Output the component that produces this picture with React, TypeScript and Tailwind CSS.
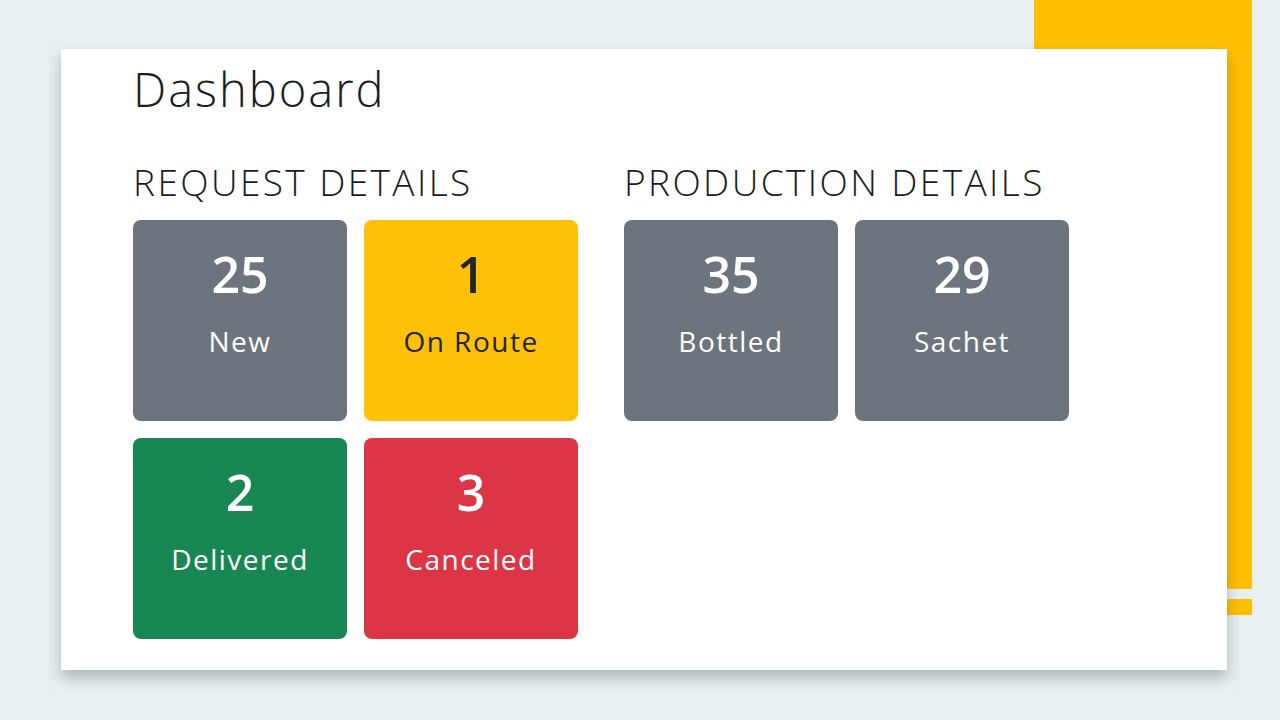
import React from 'react';

type Tile = { value: number; label: string; bg: string; text: string };

const requestTiles: Tile[] = [
  { value: 25, label: 'New', bg: 'bg-[#6c757d]', text: 'text-white' },
  { value: 1, label: 'On Route', bg: 'bg-[#ffc107]', text: 'text-[#212529]' },
  { value: 2, label: 'Delivered', bg: 'bg-[#198754]', text: 'text-white' },
  { value: 3, label: 'Canceled', bg: 'bg-[#dc3545]', text: 'text-white' },
];

const productionTiles: Tile[] = [
  { value: 35, label: 'Bottled', bg: 'bg-[#6c757d]', text: 'text-white' },
  { value: 29, label: 'Sachet', bg: 'bg-[#6c757d]', text: 'text-white' },
];

function StatTile({ tile }: { tile: Tile }) {
  return (
    <div className={`w-[214px] h-[201px] rounded-[8px] flex flex-col items-center pt-[24px] ${tile.bg} ${tile.text}`}>
      <span className="text-[50px] leading-[60px] font-semibold">{tile.value}</span>
      <span className="mt-[19px] text-[28px] leading-[36px] tracking-[1.5px]">{tile.label}</span>
    </div>
  );
}

export default function App() {
  return (
    <div
      className="relative w-[1280px] h-[720px] bg-[#e8f0f2] overflow-hidden"
      style={{ fontFamily: '"Open Sans", "Liberation Sans", sans-serif' }}
    >
      {/* yellow accent behind the card */}
      <div className="absolute left-[1034px] top-0 w-[218px] h-[589px] bg-[#ffbf00]" />
      <div className="absolute left-[1227px] top-[599px] w-[25px] h-[16px] bg-[#ffbf00]" />

      <div className="relative ml-[61px] mt-[49px] w-[1166px] h-[621px] bg-white shadow-[0_8px_14px_rgba(60,80,80,0.35)] pl-[72px] pt-[10px]">
        <h1 className="text-[47px] leading-[60px] font-light text-[#1a1d20] tracking-[2px]">Dashboard</h1>

        <div className="flex gap-[46px] mt-[40px]">
          <div className="flex flex-col">
            <h2 className="text-[37px] leading-[46px] font-light text-[#1a1d20] tracking-[2.4px]">REQUEST DETAILS</h2>
            <div className="grid grid-cols-2 gap-[17px] mt-[15px]">
              {requestTiles.map((t) => (
                <StatTile key={t.label} tile={t} />
              ))}
            </div>
          </div>

          <div className="flex flex-col">
            <h2 className="text-[37px] leading-[46px] font-light text-[#1a1d20] tracking-[2.4px]">PRODUCTION DETAILS</h2>
            <div className="grid grid-cols-2 gap-[17px] mt-[15px]">
              {productionTiles.map((t) => (
                <StatTile key={t.label} tile={t} />
              ))}
            </div>
          </div>
        </div>
      </div>
    </div>
  );
}
